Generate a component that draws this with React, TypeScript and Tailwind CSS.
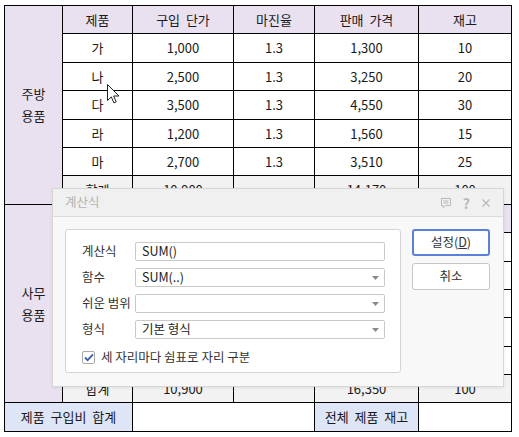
import React from "react";

const font = { fontFamily: '"Noto Sans CJK KR", "Noto Sans", sans-serif' };

type Row = [string, string, string, string, string];

const kitchen: Row[] = [
  ["가", "1,000", "1.3", "1,300", "10"],
  ["나", "2,500", "1.3", "3,250", "20"],
  ["다", "3,500", "1.3", "4,550", "30"],
  ["라", "1,200", "1.3", "1,560", "15"],
  ["마", "2,700", "1.3", "3,510", "25"],
];

// rows under the dialog: nothing of them shows
const office: Row[] = Array.from({ length: 5 }, () => ["", "", "", "", ""] as Row);

const cell = "border border-black text-center align-middle p-0";
const head = ["제품", "구입\u00a0\u00a0단가", "마진율", "판매\u00a0\u00a0가격", "재고"];

function Section({
  title,
  rows,
  total,
  showHead,
}: {
  title: [string, string];
  rows: Row[];
  total: Row;
  showHead: boolean;
}) {
  return (
    <>
      <tr className="h-[28.4px]">
        <td rowSpan={7} className={`${cell} bg-[#e9e0f0] leading-[22px]`}>
          {title[0]}
          <br />
          {title[1]}
        </td>
        {head.map((h) => (
          <td key={h} className={`${cell} bg-[#e9e0f0]`}>
            {showHead ? h : ""}
          </td>
        ))}
      </tr>
      {rows.map((r, k) => (
        <tr key={k} className="h-[28.4px]">
          {r.map((v, i) => (
            <td key={i} className={cell}>
              {v}
            </td>
          ))}
        </tr>
      ))}
      <tr className="h-[28.4px] bg-[#f2f2f2]">
        {total.map((v, i) => (
          <td key={i} className={cell}>
            {v}
          </td>
        ))}
      </tr>
    </>
  );
}

function Select({ value }: { value: string }) {
  return (
    <div className="flex h-[19px] w-[250px] items-center justify-between rounded-[2px] border border-[#c9c9c9] bg-white pl-[6px] pr-[5px] text-[12.5px] text-[#222]">
      <span>{value}</span>
      <svg width="7" height="4" viewBox="0 0 7 4">
        <path d="M0 0h7L3.5 4z" fill="#8a8a8a" />
      </svg>
    </div>
  );
}

function Field({ label, children }: { label: string; children: React.ReactNode }) {
  return (
    <div className="flex items-center">
      <span className="w-[53px] text-[12.5px] text-[#333]">{label}</span>
      {children}
    </div>
  );
}

function Dialog() {
  return (
    <div
      className="absolute left-[52px] top-[188px] flex h-[199px] w-[452px] flex-col border border-[#d6d6d6] bg-[#f8f8f8] shadow-[0_1px_3px_rgba(0,0,0,0.08)]"
      style={font}
    >
      <div className="flex h-[28px] items-center justify-between border-b border-[#dcdcdc] bg-[#f0f0f0] pl-[12px] pr-[12px]">
        <span className="text-[12.5px] text-[#b3b3b3]">계산식</span>
        <div className="flex items-center gap-[11px] text-[#b8b8b8]">
          <svg width="12" height="12" viewBox="0 0 12 12" fill="none" stroke="#b8b8b8" strokeWidth="1">
            <path d="M1.5 1.5h9v7h-5l-2.5 2v-2h-1.5z" />
            <path d="M3.5 4h5M3.5 6h5" />
          </svg>
          <span className="text-[14px] font-bold leading-none">?</span>
          <svg width="10" height="10" viewBox="0 0 10 10" stroke="#b8b8b8" strokeWidth="1.2">
            <path d="M1.5 1.5l7 7M8.5 1.5l-7 7" />
          </svg>
        </div>
      </div>
      <div className="flex gap-[11px] px-[12px] pt-[12px]">
        <div className="flex h-[144px] w-[336px] flex-col gap-[7px] rounded-[3px] border border-[#d4d4d4] bg-white pl-[16px] pt-[12px]">
          <Field label="계산식">
            <div className="flex h-[19px] w-[250px] items-center rounded-[2px] border border-[#c9c9c9] bg-white pl-[6px] text-[12.5px] text-[#222]">
              SUM()
            </div>
          </Field>
          <Field label="함수">
            <Select value="SUM(..)" />
          </Field>
          <Field label="쉬운 범위">
            <Select value="" />
          </Field>
          <Field label="형식">
            <Select value="기본 형식" />
          </Field>
          <div className="mt-[2px] flex items-center gap-[6px]">
            <div className="flex h-[13px] w-[13px] items-center justify-center rounded-[2px] border border-[#a9a9a9] bg-white">
              <svg width="10" height="9" viewBox="0 0 10 9" fill="none" stroke="#3c5dae" strokeWidth="1.8">
                <path d="M1 4.5l2.6 2.6L9 1.3" />
              </svg>
            </div>
            <span className="text-[12.5px] text-[#333]">세 자리마다 쉼표로 자리 구분</span>
          </div>
        </div>
        <div className="flex flex-col gap-[7px]">
          <button className="h-[27px] w-[78px] rounded-[3px] border-2 border-[#5b80d8] bg-white text-[12.5px] text-[#333]">
            설정(<span className="underline">D</span>)
          </button>
          <button className="h-[27px] w-[78px] rounded-[3px] border border-[#c6c6c6] bg-white text-[12.5px] text-[#333]">
            취소
          </button>
        </div>
      </div>
    </div>
  );
}

function Cursor() {
  return (
    <svg className="absolute left-[107px] top-[84px]" width="13" height="20" viewBox="0 0 13 20">
      <path d="M0.5 0.5v16l3.8-3.6 2.6 6 2.3-1-2.6-5.9h5.4z" fill="#fff" stroke="#222" strokeWidth="1" strokeLinejoin="round" />
    </svg>
  );
}

export default function App() {
  return (
    <div className="relative h-[437px] w-[519px] overflow-hidden bg-white" style={font}>
      <table className="ml-[4px] mt-[5px] w-[507px] table-fixed border-collapse text-[13px] text-[#1a1a1a]">
        <colgroup>
          <col className="w-[58px]" />
          <col className="w-[70px]" />
          <col className="w-[101px]" />
          <col className="w-[81px]" />
          <col className="w-[104px]" />
          <col className="w-[93px]" />
        </colgroup>
        <tbody>
          <Section
            title={["주방", "용품"]}
            rows={kitchen}
            total={["합계", "10,900", "", "14,170", "100"]}
            showHead
          />
          <Section
            title={["사무", "용품"]}
            rows={office}
            total={["합계", "10,900", "", "16,350", "100"]}
            showHead={false}
          />
          <tr className="h-[28.4px]">
            <td colSpan={2} className={`${cell} bg-[#dde5f6]`}>
              제품&nbsp;&nbsp;구입비&nbsp;&nbsp;합계
            </td>
            <td colSpan={2} className={cell}></td>
            <td className={`${cell} bg-[#dde5f6]`}>전체&nbsp;&nbsp;제품&nbsp;&nbsp;재고</td>
            <td className={cell}></td>
          </tr>
        </tbody>
      </table>
      <Cursor />
      <Dialog />
    </div>
  );
}
